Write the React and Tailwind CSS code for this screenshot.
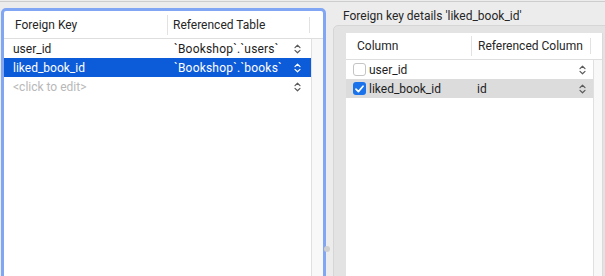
import React from 'react'

const font = { fontFamily: 'Roboto, "Liberation Sans", sans-serif' }

function Updown({ className = 'text-[#5a5a5a]' }) {
  return (
    <svg width="7" height="10" viewBox="0 0 7 10" className={className} fill="none">
      <path d="M1 3.6 L3.5 1.2 L6 3.6" stroke="currentColor" strokeWidth="1.2" strokeLinecap="round" strokeLinejoin="round" />
      <path d="M1 6.4 L3.5 8.8 L6 6.4" stroke="currentColor" strokeWidth="1.2" strokeLinecap="round" strokeLinejoin="round" />
    </svg>
  )
}

function Checkbox({ checked }) {
  if (checked) {
    return (
      <div className="w-[13px] h-[13px] rounded-[3px] bg-[#1a73ea] flex items-center justify-center shrink-0">
        <svg width="9" height="8" viewBox="0 0 9 8" fill="none">
          <path d="M1 4.2 L3.4 6.6 L8 1.2" stroke="white" strokeWidth="1.7" strokeLinecap="round" strokeLinejoin="round" />
        </svg>
      </div>
    )
  }
  return <div className="w-[13px] h-[13px] rounded-[3px] bg-white border border-[#c4c4c4] shrink-0" />
}

const fkRows = [
  { key: 'user_id', table: '`Bookshop`.`users`' },
  { key: 'liked_book_id', table: '`Bookshop`.`books`', selected: true },
  { key: '<click to edit>', table: '', placeholder: true },
]

const colRows = [
  { col: 'user_id', ref: '', checked: false },
  { col: 'liked_book_id', ref: 'id', checked: true, selected: true },
]

export default function App() {
  return (
    <div className="w-[605px] h-[276px] bg-[#ececec] overflow-hidden relative text-[12px]" style={font}>
      <div className="h-[1px]" />
      <div className="h-[1px] bg-[#cdcdcd]" />
      <div className="flex">
        {/* Left: foreign keys table with focus ring */}
        <div className="ml-[1px] mt-[6px] w-[325px] shrink-0 h-[280px] border-[3px] border-[#80a6f4] rounded-[5px] bg-white flex flex-col overflow-hidden">
          <div className="h-[28px] flex items-center border-b border-[#dedede] text-[#262626] shrink-0">
            <div className="w-[164px] pl-[11px] border-r border-[#e2e2e2] h-[20px] flex items-center">Foreign Key</div>
            <div className="w-[142px] pl-[5px] border-r border-[#e2e2e2] h-[16px] flex items-center">Referenced Table</div>
          </div>
          <div className="flex flex-1">
            <div className="w-[307px] bg-white">
              {fkRows.map((r) => (
                <div
                  key={r.key}
                  className={`h-[19px] flex items-center ${r.selected ? 'bg-[#0c5bd9] text-white' : 'text-[#1e1e1e]'}`}
                >
                  <div className={`w-[164px] pl-[9px] ${r.placeholder ? 'text-[#b8b8b8]' : ''}`}>{r.key}</div>
                  <div className="w-[126px] pl-[6px] tracking-[0.2px]">{r.table}</div>
                  <Updown className={r.selected ? 'text-white' : 'text-[#5a5a5a]'} />
                </div>
              ))}
            </div>
            <div className="flex-1 bg-[#f8f8f8] border-l border-[#e0e0e0]" />
          </div>
        </div>

        {/* Right: foreign key details */}
        <div className="flex-1 min-w-0 pl-[7px]">
          <div className="h-[17px] mt-[5px] pl-[10px] flex items-center text-[#262626] whitespace-nowrap">
            Foreign key details 'liked_book_id'
          </div>
          <div className="mt-[1px] w-[290px] h-[260px] bg-[#e3e3e3] border border-[#d6d6d6] rounded-[5px] pl-[12px] pt-[7px]">
            <div className="w-[257px] h-[260px] bg-white border-r border-[#dadada] flex flex-col">
              <div className="h-[27px] flex items-center border-b border-[#dedede] text-[#262626] shrink-0">
                <div className="w-[126px] pl-[11px] border-r border-[#e2e2e2] h-[20px] flex items-center">Column</div>
                <div className="w-[119px] pl-[6px] border-r border-[#e2e2e2] h-[16px] flex items-center">Referenced Column</div>
              </div>
              <div className="flex flex-1">
                <div className="w-[247px] bg-white">
                  {colRows.map((r) => (
                    <div key={r.col} className={`h-[19px] flex items-center text-[#1e1e1e] ${r.selected ? 'bg-[#dcdcdc]' : ''}`}>
                      <div className="w-[131px] pl-[7px] flex items-center gap-[3px]">
                        <Checkbox checked={r.checked} />
                        <span>{r.col}</span>
                      </div>
                      <div className="w-[102px]">{r.ref}</div>
                      <Updown />
                    </div>
                  ))}
                </div>
                <div className="flex-1 bg-[#f8f8f8] border-l border-[#e0e0e0]" />
              </div>
            </div>
          </div>
        </div>
      </div>
      {/* splitter grip */}
      <div className="absolute left-[324px] top-[246px] w-[6px] h-[6px] rounded-full bg-[#cfcfcf]" />
    </div>
  )
}
